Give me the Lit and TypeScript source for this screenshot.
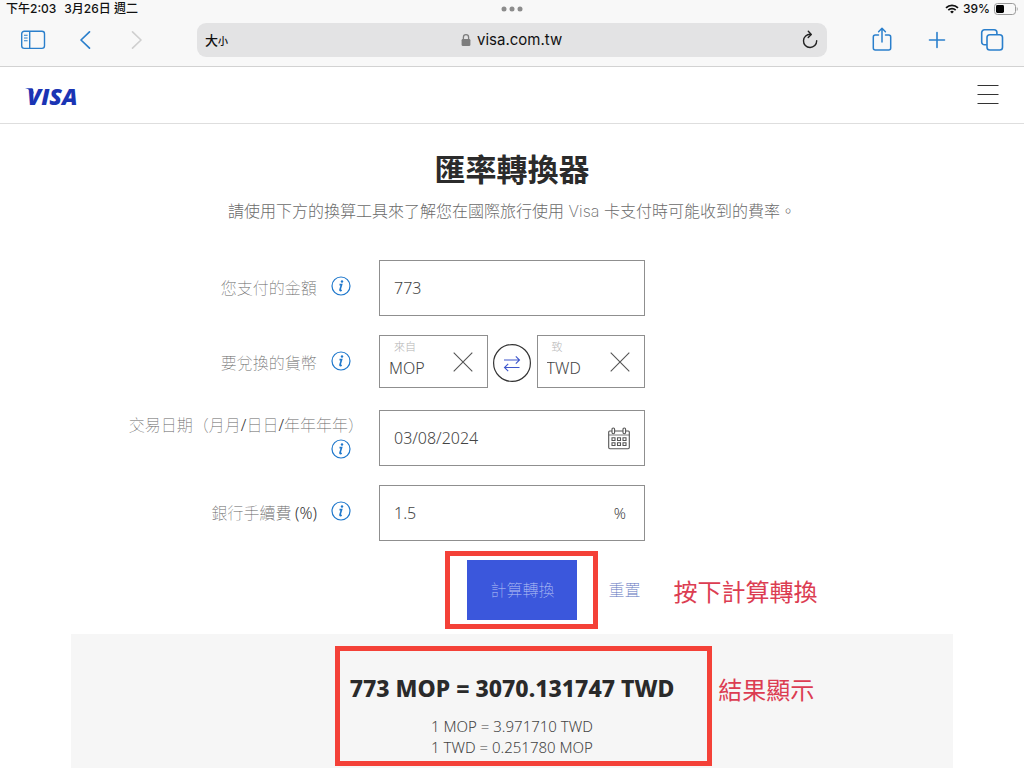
import { LitElement, html, css, svg } from "lit";
import { customElement, property } from "lit/decorators.js";

const infoIcon = svg`<svg width="20" height="20" viewBox="0 0 20 20" fill="none" aria-hidden="true">
  <circle cx="10" cy="10" r="9" stroke="#1f78cc" stroke-width="1.2"/>
  <circle cx="11" cy="5.500" r="1.2" fill="#1f78cc"/>
  <path d="M8.500 8.600h2.100L9 13.800q-.2 1 .8.8l1-.4" stroke="#1f78cc" stroke-width="1.600"/>
</svg>`;

const closeIcon = svg`<svg width="20" height="20" viewBox="0 0 20 20" aria-hidden="true">
  <path d="M.7.7l18.600 18.600M19.300.7L.7 19.300" stroke="#555" stroke-width="1.1"/>
</svg>`;

@customElement("browser-bar")
export class BrowserBar extends LitElement {
  static styles = css`
    :host {
      display: block;
      background: #f8f8f8;
      border-bottom: 1px solid #d2d2d2;
      font-family: Inter, "Noto Sans CJK TC", sans-serif;
      color: #111;
    }
    .status {
      display: grid;
      grid-template-columns: 1fr auto 1fr;
      align-items: center;
      height: 18px;
      padding: 0 6px;
      font-size: 12px;
      font-weight: 500;
      line-height: 18px;
    }
    .clock { display: flex; gap: 8px; }
    .power { display: flex; justify-content: flex-end; align-items: center; gap: 4px; }
    svg { display: block; }
    .tools {
      display: grid;
      grid-template-columns: 197px minmax(0, 1fr) 197px;
      align-items: center;
      padding: 5px 0 9px;
    }
    .group { display: flex; align-items: center; }
    .left { gap: 26px; padding-left: 20px; }
    .right { gap: 29px; padding-right: 19px; justify-content: flex-end; }
    button {
      border: 0;
      padding: 0;
      background: none;
      color: inherit;
      font: inherit;
      display: flex;
      justify-content: center;
    }
    .group button { width: 26px; }
    .address {
      display: grid;
      grid-template-columns: 1fr auto 1fr;
      align-items: center;
      height: 34px;
      padding: 0 8px;
      border-radius: 9px;
      background: #e3e3e4;
    }
    .size { justify-self: start; align-items: baseline; font-size: 13px; font-weight: 500; }
    .size small { font-size: 10px; }
    .reload { justify-self: end; }
    .url { display: flex; align-items: center; gap: 6px; }
    .url input {
      width: 86px;
      border: 0;
      padding: 0;
      background: none;
      color: inherit;
      font: 15px/20px Inter, sans-serif;
    }
  `;

  render() {
    return html`
      <div class="status">
        <div class="clock"><span>下午2:03</span><span>3月26日 週二</span></div>
        <svg width="22" height="6" viewBox="0 0 22 6" fill="#8c8c8c" aria-hidden="true">
          <circle cx="3" cy="3" r="2.5"/><circle cx="11" cy="3" r="2.5"/><circle cx="19" cy="3" r="2.5"/>
        </svg>
        <div class="power">
          <svg width="14" height="10" viewBox="0 0 14 10" fill="none" stroke="#111" aria-hidden="true">
            <path d="M1 3.800a8.700 8.700 0 0 1 12 0" stroke-width="1.800"/>
            <path d="M3.300 6.100a5.300 5.300 0 0 1 7.400 0" stroke-width="1.700"/>
            <path d="M7 9.600L5.100 7.800a2.700 2.700 0 0 1 3.800 0z" fill="#111" stroke="none"/>
          </svg>
          <span>39%</span>
          <svg width="24" height="12" viewBox="0 0 24 12" aria-hidden="true">
            <rect x=".5" y=".5" width="21" height="11" rx="3" fill="none" stroke="#999"/>
            <rect x="2" y="2" width="8" height="8" rx="1.400" fill="#000"/>
            <path d="M22.800 4v4c1.200-.5 1.200-3.500 0-4z" fill="#999"/>
          </svg>
        </div>
      </div>
      <div class="tools">
        <div class="group left">
          <button aria-label="側邊欄">
            <svg width="26" height="20" viewBox="0 0 26 20" fill="none" stroke="#2a7fcc">
              <rect x="1.700" y="1.200" width="22.800" height="17.200" rx="2.600" stroke-width="1.400"/>
              <path d="M9.700 1v17.500" stroke-width="1.400"/>
              <path d="M4 5.200h3.600M4 8h3.600M4 10.800h3.600" stroke-width="1.100"/>
            </svg>
          </button>
          <button aria-label="上一頁">
            <svg width="12" height="20" viewBox="0 0 12 20" fill="none" stroke="#2a7fcc" stroke-width="1.700" stroke-linecap="round" stroke-linejoin="round"><path d="M10.500 1.800L2 10l8.500 8.200"/></svg>
          </button>
          <button aria-label="下一頁" disabled>
            <svg width="12" height="20" viewBox="0 0 12 20" fill="none" stroke="#cfcfcf" stroke-width="1.600" stroke-linecap="round" stroke-linejoin="round"><path d="M1.500 1.800L10 10l-8.500 8.200"/></svg>
          </button>
        </div>
        <div class="address">
          <button class="size" aria-label="文字大小">大<small>小</small></button>
          <label class="url">
            <svg width="10" height="14" viewBox="0 0 10 14" aria-label="安全連線">
              <path d="M2.400 7V4.200a2.600 2.600 0 0 1 5.200 0V7" fill="none" stroke="#7d7d7d" stroke-width="1.300"/>
              <rect x=".6" y="6" width="8.800" height="7" rx="1.300" fill="#7d7d7d"/>
            </svg>
            <input type="text" aria-label="網址" .value=${"visa.com.tw"} />
          </label>
          <button class="reload" aria-label="重新載入">
            <svg width="18" height="20" viewBox="0 0 18 20" fill="none" stroke="#222" stroke-width="1.400" stroke-linecap="round" stroke-linejoin="round">
              <path d="M9.500 4.300A6.600 6.600 0 1 0 15.700 10.800"/><path d="M7.300 1.300l3 3.100-3.100 3"/>
            </svg>
          </button>
        </div>
        <div class="group right">
          <button aria-label="分享">
            <svg width="20" height="26" viewBox="0 0 20 26" fill="none" stroke="#2a7fcc" stroke-width="1.500" stroke-linecap="round" stroke-linejoin="round">
              <path d="M6.500 8H3.300a2 2 0 0 0-2 2v11a2 2 0 0 0 2 2h13.400a2 2 0 0 0 2-2V10a2 2 0 0 0-2-2h-3.200"/>
              <path d="M10 15V1.500M6.600 4.700L10 1.300l3.400 3.400"/>
            </svg>
          </button>
          <button aria-label="新增分頁">
            <svg width="18" height="18" viewBox="0 0 18 18" stroke="#2a7fcc" stroke-width="1.600" stroke-linecap="round"><path d="M9 1.500v15M1.500 9h15"/></svg>
          </button>
          <button aria-label="所有分頁">
            <svg width="24" height="22" viewBox="0 0 24 22" fill="none" stroke="#2a7fcc" stroke-width="1.600">
              <path d="M6.800 15.800H4.500a2.800 2.800 0 0 1-2.800-2.800V3.600A2.800 2.800 0 0 1 4.500.8h9.600a2.800 2.800 0 0 1 2.800 2.800v1.900"/>
              <rect x="7" y="5.700" width="15.500" height="15.300" rx="2.800"/>
            </svg>
          </button>
        </div>
      </div>
    `;
  }
}

@customElement("currency-box")
export class CurrencyBox extends LitElement {
  @property() caption = "";
  @property() code = "";

  static styles = css`
    :host {
      flex: 1;
      min-width: 0;
      display: flex;
      align-items: center;
      justify-content: space-between;
      box-sizing: border-box;
      height: 53px;
      padding: 0 14px 0 9px;
      border: 1px solid #8f8f8f;
    }
    .entry { display: flex; flex-direction: column; min-width: 0; padding-bottom: 6px; }
    label {
      padding-left: 5px;
      font-size: 11px;
      font-weight: 300;
      line-height: 18px;
      color: #b4b4b4;
    }
    input {
      width: 48px;
      height: 24px;
      border: 0;
      padding: 0;
      background: none;
      color: #444;
      font: 300 16px/24px "Noto Sans", "Noto Sans CJK TC", sans-serif;
    }
    button { display: flex; border: 0; padding: 0; background: none; }
  `;

  render() {
    return html`
      <div class="entry">
        <label for="code">${this.caption}</label>
        <input id="code" type="text" .value=${this.code} />
      </div>
      <button type="button" aria-label="清除">${closeIcon}</button>
    `;
  }
}

@customElement("app-root")
export class AppRoot extends LitElement {
  static styles = css`
    :host {
      display: flex;
      flex-direction: column;
      min-height: 100vh;
      background: #fff;
      color: #444;
      font: 300 16px/26px "Noto Sans", "Noto Sans CJK TC", sans-serif;
    }
    svg { display: block; }
    button { font: inherit; border: 0; padding: 0; background: none; }
    .site {
      display: flex;
      align-items: center;
      justify-content: space-between;
      height: 56px;
      padding: 0 25px 0 24px;
      border-bottom: 1px solid #dedede;
    }
    .brand { display: block; }
    .wordmark {
      font-family: "Open Sans", sans-serif;
      font-size: 23px;
      font-weight: 800;
      font-style: italic;
      fill: #1a34b4;
    }
    main {
      flex: 1;
      display: flex;
      flex-direction: column;
      box-sizing: border-box;
      width: 100%;
      max-width: 882px;
      margin: 0 auto;
      padding-top: 23px;
    }
    h1 {
      margin: 0;
      text-align: center;
      font-size: 31px;
      font-weight: 700;
      line-height: 44px;
      color: #2b2b2b;
    }
    .intro {
      margin: 7px 0 36px;
      text-align: center;
      font-family: Inter, "Noto Sans CJK TC", sans-serif;
      font-weight: 200;
      color: #6b6b6b;
    }
    form { display: flex; flex-direction: column; gap: 19px; }
    .row {
      display: grid;
      grid-template-columns: minmax(0, 1fr) 266px minmax(0, 1fr);
      column-gap: 15px;
      min-height: 56px;
    }
    .name {
      align-self: center;
      padding-left: 50px;
      text-align: right;
      font-weight: 100;
      color: #666;
    }
    .name label { font-family: "Noto Sans CJK TC", sans-serif; }
    .latin { font-family: "Noto Sans", sans-serif; font-weight: 300; color: #333; }
    .info {
      display: inline-block;
      vertical-align: middle;
      margin: 0 13px 6px 10px;
    }
    .field {
      display: flex;
      align-items: center;
      box-sizing: border-box;
      height: 56px;
      padding: 0 14px;
      border: 1px solid #8f8f8f;
    }
    .field input {
      flex: 1;
      min-width: 0;
      border: 0;
      padding: 0;
      background: none;
      color: #444;
      font: inherit;
    }
    .unit { padding-right: 4px; font-size: 15px; }
    .pair { display: flex; align-items: flex-start; gap: 5px; }
    .swap { align-self: center; display: flex; }
    .actions {
      display: flex;
      justify-content: center;
      align-items: center;
      gap: 31px;
      padding-left: 84px;
    }
    .target { position: relative; }
    .submit {
      display: block;
      width: 110px;
      height: 60px;
      background: #3b57dc;
      color: #b9c4f5;
      font-weight: 100;
    }
    .reset { color: #5a70bd; font-weight: 100; }
    .mark {
      position: absolute;
      box-sizing: border-box;
      border: 5px solid #f44138;
      pointer-events: none;
    }
    .mark-submit { inset: -9px -21px -9px -22px; }
    .mark-result { inset: -34px -38px -8px -15px; }
    .note {
      position: absolute;
      top: 50%;
      font-size: 24px;
      font-weight: 400;
      line-height: 36px;
      white-space: nowrap;
      color: #dc3d52;
    }
    .note-submit { left: 206px; margin-top: -16px; }
    .note-result { left: 100%; margin: -47px 0 0 44px; }
    .result {
      flex: 1;
      display: flex;
      justify-content: center;
      margin-top: 14px;
      padding: 46px 0 10px;
      background: #f6f6f6;
    }
    .figures { position: relative; text-align: center; }
    h2 {
      margin: 0 0 20px;
      font-size: 23px;
      font-weight: 800;
      line-height: 16px;
      color: #2a2a2a;
    }
    .figures p { margin: 0; font-size: 15px; line-height: 21px; }
  `;

  private info() {
    return html`<button class="info" type="button" aria-label="說明">${infoIcon}</button>`;
  }

  render() {
    return html`
      <browser-bar></browser-bar>
      <header class="site">
        <a class="brand" href="#" aria-label="Visa">
          <svg width="60" height="36" viewBox="0 0 60 36">
            <path d="M1 11.200h7.500l1.500 6C7.500 13.500 4.800 12 1 11.200z" fill="#1a34b4"/>
            <text class="wordmark" x="3" y="28">VISA</text>
          </svg>
        </a>
        <button aria-label="選單">
          <svg width="22" height="20" viewBox="0 0 22 20" stroke="#333" stroke-width="1"><path d="M.5.5h21M.5 9.500h21M.5 18.500h21"/></svg>
        </button>
      </header>
      <main>
        <h1>匯率轉換器</h1>
        <p class="intro">請使用下方的換算工具來了解您在國際旅行使用 Visa 卡支付時可能收到的費率。</p>
        <form @submit=${(e: Event) => e.preventDefault()}>
          <div class="row">
            <div class="name"><label for="amount">您支付的金額</label> ${this.info()}</div>
            <div class="field"><input id="amount" type="text" inputmode="decimal" .value=${"773"} /></div>
          </div>
          <div class="row">
            <div class="name"><label>要兌換的貨幣</label> ${this.info()}</div>
            <div class="pair">
              <currency-box caption="來自" code="MOP"></currency-box>
              <button class="swap" type="button" aria-label="交換貨幣">
                <svg width="39" height="39" viewBox="0 0 39 39" fill="none">
                  <circle cx="19" cy="19" r="18.400" stroke="#333" stroke-width="1.200"/>
                  <path d="M11 16h15.500M22.800 12.300l3.700 3.700-3.700 3.700M26.500 23.500H11.500M15.200 19.800L11.500 23.500l3.700 3.700" stroke="#3f57cc" stroke-width="1.100"/>
                </svg>
              </button>
              <currency-box caption="致" code="TWD"></currency-box>
            </div>
          </div>
          <div class="row">
            <div class="name">
              <label for="date">交易日期（月月<span class="latin">/</span>日日<span class="latin">/</span>年年年年）</label>
              ${this.info()}
            </div>
            <div class="field">
              <input id="date" type="text" .value=${"03/08/2024"} />
              <button type="button" aria-label="選擇日期">
                <svg width="22" height="24" viewBox="0 0 22 24" fill="none" stroke="#555" stroke-width="1.100">
                  <path d="M4 5H1.700A1 1 0 0 0 .7 6v15.500a1.200 1.200 0 0 0 1.200 1.200h18.200a1.200 1.200 0 0 0 1.200-1.200V6a1 1 0 0 0-1-1H18M6.600 5H15"/>
                  <rect x="4" y="2" width="2.600" height="5.800" rx="1.200"/><rect x="15" y="2" width="2.600" height="5.800" rx="1.200"/>
                  <path d="M.8 9h20.400" stroke-width=".8"/>
                  <path d="M4 11.700h3v2.800H4zM9.500 11.700h3v2.800h-3zM15 11.700h3v2.800h-3zM4 16.700h3v2.800H4zM9.500 16.700h3v2.800h-3zM15 16.700h3v2.800h-3z"/>
                </svg>
              </button>
            </div>
          </div>
          <div class="row">
            <div class="name"><label for="fee">銀行手續費 <span class="latin">(%)</span></label> ${this.info()}</div>
            <div class="field"><input id="fee" type="text" inputmode="decimal" .value=${"1.5"} /><span class="unit">%</span></div>
          </div>
          <div class="actions">
            <div class="target">
              <button class="submit" type="submit">計算轉換</button>
              <span class="mark mark-submit"></span>
              <span class="note note-submit">按下計算轉換</span>
            </div>
            <button class="reset" type="reset">重置</button>
          </div>
        </form>
        <section class="result">
          <div class="figures">
            <h2>773 MOP = 3070.131747 TWD</h2>
            <p>1 MOP = 3.971710 TWD</p>
            <p>1 TWD = 0.251780 MOP</p>
            <span class="mark mark-result"></span>
            <span class="note note-result">結果顯示</span>
          </div>
        </section>
      </main>
    `;
  }
}
